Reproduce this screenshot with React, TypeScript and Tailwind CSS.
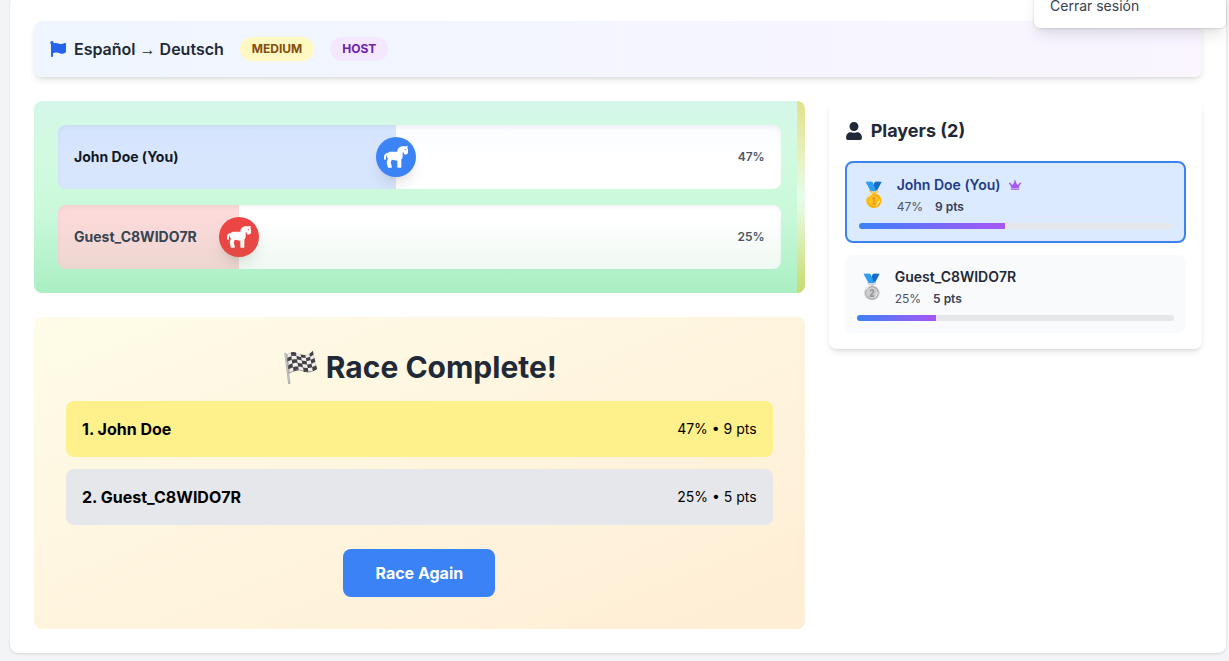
import React from "react";
import { FaCrown, FaFlag, FaHorse, FaUser } from "react-icons/fa";

type Player = {
  name: string;
  label: string;
  progress: number;
  points: number;
  medal: string;
  isYou: boolean;
  isHost: boolean;
};

const players: Player[] = [
  { name: "John Doe", label: "John Doe (You)", progress: 46.8, points: 9, medal: "🥇", isYou: true, isHost: true },
  { name: "Guest_C8WIDO7R", label: "Guest_C8WIDO7R", progress: 25, points: 5, medal: "🥈", isYou: false, isHost: false },
];

const percent = (p: Player) => `${Math.round(p.progress)}%`;

function UserMenu() {
  return (
    <nav className="absolute -top-4 right-[3px] z-10 w-48 rounded-md bg-white py-1 shadow-lg ring-1 ring-black/5">
      <button type="button" className="block w-full px-4 py-2 text-left text-sm text-[#374151]">
        Cerrar sesión
      </button>
    </nav>
  );
}

function RaceHeader() {
  return (
    <header className="flex items-center gap-4 rounded-lg bg-linear-to-r/srgb from-[#eff6ff] to-[#faf5ff] p-4 shadow-md">
      <div className="flex items-center gap-2">
        <FaFlag className="text-[#2563eb]" />
        <span className="font-semibold text-[#1f2937]">
          Español <span className="font-['Liberation_Sans',sans-serif] leading-none">→</span> Deutsch
        </span>
      </div>
      <span className="rounded-full bg-[#fef9c3] px-3 py-1 text-xs font-bold text-[#854d0e]">MEDIUM</span>
      <span className="rounded-full bg-[#f3e8ff] px-3 py-1 text-xs font-bold text-[#6b21a8]">HOST</span>
    </header>
  );
}

function Lane({ player }: { player: Player }) {
  return (
    <div className="relative flex h-16 items-center justify-between overflow-hidden rounded-lg bg-white px-4 shadow-inner">
      <div
        className={player.isYou ? "absolute inset-y-0 left-0 bg-[#3b82f6]/20" : "absolute inset-y-0 left-0 bg-[#ef4444]/20"}
        style={{ width: `${player.progress}%` }}
      />
      <span className={player.isYou ? "relative text-sm font-bold text-[#111827]" : "relative text-sm font-bold text-[#374151]"}>
        {player.label}
      </span>
      <span className="relative text-xs font-semibold text-[#4b5563]">{percent(player)}</span>
      <div
        className={
          player.isYou
            ? "absolute top-3 flex size-10 -translate-x-1/2 items-center justify-center rounded-full bg-[#3b82f6] text-2xl text-white shadow-lg"
            : "absolute top-3 flex size-10 -translate-x-1/2 items-center justify-center rounded-full bg-[#ef4444] text-2xl text-white shadow-lg"
        }
        style={{ left: `${player.progress}%` }}
      >
        <FaHorse />
      </div>
    </div>
  );
}

function RaceTrack() {
  return (
    <section className="relative flex flex-col gap-4 overflow-hidden rounded-lg bg-linear-to-b/srgb from-[#dcfce7] to-[#bbf7d0] p-6">
      {players.map((p) => (
        <Lane key={p.name} player={p} />
      ))}
      <div className="absolute inset-y-0 right-0 w-2 bg-linear-to-b/srgb from-[#facc15] via-white to-[#facc15] opacity-50" />
      <div className="pointer-events-none absolute inset-0 bg-[linear-gradient(to_bottom,#93c5fd_0%,transparent_30%,transparent_60%,#16a34a_100%)] opacity-10" />
    </section>
  );
}

function Results() {
  return (
    <section className="rounded-lg bg-linear-to-br/srgb from-[#fefce8] to-[#ffedd5] p-8 text-center">
      <h2 className="mb-4 text-3xl font-bold text-[#1f2937]">🏁 Race Complete!</h2>
      <ol className="flex flex-col gap-3">
        {players.map((p, i) => (
          <li
            key={p.name}
            className={
              i === 0
                ? "flex items-center justify-between rounded-lg bg-[#fef08a] p-4"
                : "flex items-center justify-between rounded-lg bg-[#e5e7eb] p-4"
            }
          >
            <span className="font-bold">{`${i + 1}. ${p.name}`}</span>
            <span className="text-sm">{`${percent(p)} • ${p.points} pts`}</span>
          </li>
        ))}
      </ol>
      <button type="button" className="mt-6 rounded-lg bg-[#3b82f6] px-8 py-3 font-bold text-white">
        Race Again
      </button>
    </section>
  );
}

function PlayerCard({ player }: { player: Player }) {
  return (
    <li
      className={
        player.isYou
          ? "rounded-lg border-2 border-[#3b82f6] bg-[#dbeafe] p-3"
          : "rounded-lg bg-[#f9fafb] p-3"
      }
    >
      <div className="flex items-center gap-2">
        <span className="text-2xl">{player.medal}</span>
        <div className="flex flex-col gap-1">
          <div className="flex items-center gap-2">
            <span className={player.isYou ? "text-sm font-semibold text-[#1e3a8a]" : "text-sm font-semibold text-[#1f2937]"}>
              {player.label}
            </span>
            {player.isHost && <FaCrown className="text-xs text-[#a855f7]" />}
          </div>
          <div className="flex gap-3 text-xs">
            <span className="text-[#4b5563]">{percent(player)}</span>
            <span className="font-semibold text-[#374151]">{player.points} pts</span>
          </div>
        </div>
      </div>
      <div
        role="progressbar"
        aria-label={player.name}
        aria-valuenow={Math.round(player.progress)}
        className="mt-2 h-1.5 overflow-hidden rounded-full bg-[#e5e7eb]"
      >
        <div className="h-full bg-linear-to-r/srgb from-[#3b82f6] to-[#a855f7]" style={{ width: `${player.progress}%` }} />
      </div>
    </li>
  );
}

function PlayerList() {
  return (
    <aside className="rounded-lg bg-white p-4 shadow-md">
      <h3 className="mb-4 flex items-center gap-2 text-lg font-bold text-[#1f2937]">
        <FaUser />
        Players ({players.length})
      </h3>
      <ul className="flex flex-col gap-3">
        {players.map((p) => (
          <PlayerCard key={p.name} player={p} />
        ))}
      </ul>
    </aside>
  );
}

export default function App() {
  return (
    <div className="relative flow-root min-h-screen overflow-hidden bg-[#f3f4f6] pr-[3px] pb-2 pl-[10px] font-['Inter',sans-serif]">
      <UserMenu />
      <main className="-mt-[3px] flex flex-col gap-6 rounded-lg bg-white p-6 shadow-sm">
        <RaceHeader />
        <div className="grid grid-cols-3 items-start gap-6">
          <div className="col-span-2 flex flex-col gap-6">
            <RaceTrack />
            <Results />
          </div>
          <PlayerList />
        </div>
      </main>
    </div>
  );
}
